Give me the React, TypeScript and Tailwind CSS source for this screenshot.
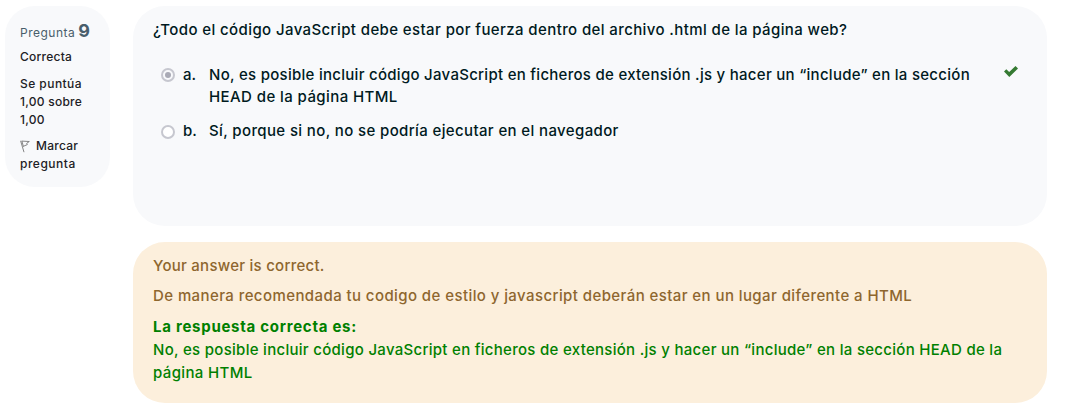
import type { ReactNode } from "react";

function Line({ className = "", children }: { className?: string; children: ReactNode }) {
  return <span className={`block w-max whitespace-nowrap ${className}`}>{children}</span>;
}

function Radio({ checked = false }: { checked?: boolean }) {
  return (
    <span
      className={`flex size-[14px] shrink-0 items-center justify-center rounded-full border-2 border-[#c6c7cf] ${checked ? "bg-[#f8f9fb]" : "bg-white"}`}
    >
      {checked && <span className="size-[6px] rounded-full bg-[#a9aab5]" />}
    </span>
  );
}

function FlagIcon() {
  return (
    <svg width="10" height="13" viewBox="0 0 10 13" fill="none" stroke="#777777" strokeWidth="0.9">
      <path d="M0.6 0.8 L4 12.2 M1.8 0.8 L3.4 6.5 M1.8 1.1 L9.3 1.5 L6.7 3.3 L7.3 4.6 L3.2 6.4" />
    </svg>
  );
}

function CheckIcon() {
  return (
    <svg width="14" height="11" viewBox="0 0 14 11" fill="#357a32">
      <path d="M0 5.6 L2.3 3.3 L5.2 6 L11.5 0 L14 2.4 L5.3 11 Z" />
    </svg>
  );
}

export default function App() {
  return (
    <div className="flex h-[414px] w-[1076px] items-start gap-[23px] overflow-hidden bg-white pl-[5px] pt-[6px] font-['Inter',sans-serif]">
      <aside className="h-[181px] w-[105px] shrink-0 rounded-[30px] bg-[#f8f9fb] pl-[15px] pt-[13px] text-[12px] font-medium leading-[18px] text-[#1d2125]">
        <h3 className="flex h-[24px] items-baseline gap-[3px] leading-[24px] text-[#495e6b]">
          <Line className="text-[12px] font-normal tracking-[0.5px]">Pregunta</Line>
          <Line className="text-[18px] font-bold">9</Line>
        </h3>
        <div className="mt-[5px]"><Line className="tracking-[0.25px]">Correcta</Line></div>
        <div className="mt-[9px]">
          <Line className="tracking-[0.45px]">Se puntúa</Line>
          <Line className="tracking-[0.25px]">1,00 sobre</Line>
          <Line className="tracking-[0.2px]">1,00</Line>
        </div>
        <div className="mt-[8px]">
          <div className="flex items-center gap-[6px]">
            <FlagIcon />
            <Line className="tracking-[0.25px]">Marcar</Line>
          </div>
          <Line className="tracking-[0.5px]">pregunta</Line>
        </div>
      </aside>
      <main className="flex w-[914px] flex-col gap-[16px] text-[15px] font-medium">
        <section className="h-[220px] rounded-[32px] bg-[#f8f9fb] pl-[20px] pt-[13px] leading-[22px] text-[#001a1e]">
          <Line className="tracking-[0.395px]">¿Todo el código JavaScript debe estar por fuerza dentro del archivo .html de la página web?</Line>
          <div className="mt-[23px] flex items-start pl-[8px]">
            <div className="pt-[4px]"><Radio checked /></div>
            <span className="ml-[8px] w-[26px]">a.</span>
            <div className="w-[795px]">
              <Line className="tracking-[0.28px]">No, es posible incluir código JavaScript en ficheros de extensión .js y hacer un “include” en la sección</Line>
              <Line className="tracking-[0.41px]">HEAD de la página HTML</Line>
            </div>
            <div className="pt-[2px]"><CheckIcon /></div>
          </div>
          <div className="mt-[12px] flex items-start pl-[8px]">
            <div className="pt-[5px]"><Radio /></div>
            <span className="ml-[8px] w-[26px]">b.</span>
            <Line className="tracking-[0.37px]">Sí, porque si no, no se podría ejecutar en el navegador</Line>
          </div>
        </section>
        <section className="h-[161px] rounded-[32px] bg-[#fcefdc] pl-[20px] pt-[13px] leading-[22px] text-[#8e662e]">
          <Line className="tracking-[0.26px]">Your answer is correct.</Line>
          <Line className="mt-[8px] tracking-[0.415px]">De manera recomendada tu codigo de estilo y javascript deberán estar en un lugar diferente a HTML</Line>
          <div className="mt-[9px] text-[#008000]">
            <Line className="font-bold tracking-[0.73px]">La respuesta correcta es:</Line>
            <Line className="mt-px tracking-[0.29px]">No, es posible incluir código JavaScript en ficheros de extensión .js y hacer un “include” en la sección HEAD de la</Line>
            <Line className="mt-px tracking-[0.35px]">página HTML</Line>
          </div>
        </section>
      </main>
    </div>
  );
}
